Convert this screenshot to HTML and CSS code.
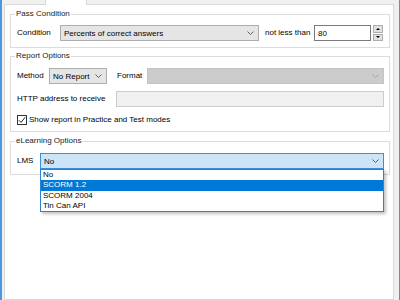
FILE: index.html
```html
<!DOCTYPE html>
<html>
<head>
<meta charset="utf-8">
<link rel="stylesheet" href="styles.css">
</head>
<body>
<div class="window">
  <div class="tabs">
    <div class="tab active"></div>
  </div>
  <div class="page">
    <fieldset class="group g1">
      <legend>Pass Condition</legend>
      <div class="row">
        <span class="lbl w-cond">Condition</span>
        <div class="combo cond"><span class="val">Percents of correct answers</span><svg class="chev" width="7" height="4" viewBox="0 0 7 4"><polyline points="0.5,0.5 3.5,3.5 6.5,0.5"/></svg></div>
        <span class="lbl w-nlt">not less than</span>
        <div class="textbox num">80</div>
        <div class="spin">
          <div class="sbtn"><svg width="4" height="2" viewBox="0 0 4 2"><polygon points="0,2 2,0 4,2"/></svg></div>
          <div class="sbtn"><svg width="4" height="2" viewBox="0 0 4 2"><polygon points="0,0 4,0 2,2"/></svg></div>
        </div>
      </div>
    </fieldset>

    <fieldset class="group g2">
      <legend>Report Options</legend>
      <div class="row">
        <span class="lbl w-method">Method</span>
        <div class="combo method"><span class="val">No Report</span><svg class="chev" width="7" height="4" viewBox="0 0 7 4"><polyline points="0.5,0.5 3.5,3.5 6.5,0.5"/></svg></div>
        <span class="lbl w-format">Format</span>
        <div class="combo disabled grow"><span class="val"></span><svg class="chev" width="7" height="4" viewBox="0 0 7 4"><polyline points="0.5,0.5 3.5,3.5 6.5,0.5"/></svg></div>
      </div>
      <div class="row">
        <span class="lbl w-http">HTTP address to receive</span>
        <div class="textbox disabled grow"></div>
      </div>
      <div class="row check-row">
        <span class="checkbox"><svg width="8" height="8" viewBox="0 0 8 8"><polyline points="0.8,4.2 3,6.4 7.2,1.2"/></svg></span>
        <span class="lbl">Show report in Practice and Test modes</span>
      </div>
    </fieldset>

    <fieldset class="group g3">
      <legend>eLearning Options</legend>
      <div class="row">
        <span class="lbl w-lms">LMS</span>
        <div class="combo open grow"><span class="val">No</span><svg class="chev" width="7" height="4" viewBox="0 0 7 4"><polyline points="0.5,0.5 3.5,3.5 6.5,0.5"/></svg>
          <ul class="dropdown">
            <li>No</li>
            <li class="sel">SCORM 1.2</li>
            <li>SCORM 2004</li>
            <li>Tin Can API</li>
          </ul>
        </div>
      </div>
    </fieldset>
  </div>
</div>
</body>
</html>
```

FILE: styles.css
```css
* { box-sizing: border-box; }
html, body { margin: 0; padding: 0; }
body {
  width: 400px;
  height: 300px;
  overflow: hidden;
  font-family: "Liberation Sans", Arial, sans-serif;
  font-size: 8px;
  color: #000;
  background: #f0f0f0;
}
.window {
  width: 400px;
  height: 300px;
  display: flex;
  flex-direction: column;
  background: #f0f0f0;
  border-left: 2px solid #4a97e0;
  border-right: 1px solid #4a97e0;
}
.tabs {
  height: 4px;
  display: flex;
  padding-left: 43px;
}
.tab.active {
  position: relative;
  z-index: 1;
  width: 42px;
  height: 5px;
  background: #fff;
  border-left: 1px solid #d9d9d9;
  border-right: 1px solid #d9d9d9;
}
.page {
  flex: 1;
  margin-left: 2px;
  width: 390px;
  background: #fff;
  border: 1px solid #d9d9d9;
  padding: 4px 3px 0 5px;
  display: flex;
  flex-direction: column;
}
.group {
  margin: 0;
  border: 1px solid #dcdcdc;
  padding: 6px 5px 6px 6px;
  min-width: 0;
  display: flex;
  flex-direction: column;
  gap: 7px;
}
.group legend {
  padding: 0 1px;
  margin-left: -2px;
  line-height: 10px;
  height: 10px;
  color: #1a1a1a;
}
.g2 { margin-top: 3px; padding-top: 7px; }
.g3 { margin-top: 4px; padding-top: 7px; padding-bottom: 5px; }
.row {
  display: flex;
  align-items: center;
}
.lbl { white-space: nowrap; line-height: 10px; }
.w-cond { width: 43px; }
.w-nlt { width: 49px; margin-left: 6px; }
.w-method { width: 32px; }
.w-format { width: 30px; margin-left: 10px; }
.w-http { width: 99px; }
.w-lms { width: 23px; }
.grow { flex: 1; min-width: 0; }

.combo {
  position: relative;
  height: 16px;
  display: flex;
  align-items: center;
  justify-content: space-between;
  padding: 0 4px 0 3px;
  background: #e5e5e5;
  border: 1px solid #adadad;
}
.combo .val { white-space: nowrap; }
.chev { display: block; flex: none; }
.chev polyline { fill: none; stroke: #606060; stroke-width: 1; }
.cond { width: 199px; }
.method { width: 58px; }
.combo.disabled { background: #cccccc; border-color: #c4c4c4; }
.combo.disabled .chev polyline { stroke: #a0a0a0; }
.combo.open { background: #cce4f7; border-color: #3c8fdb; }

.textbox {
  height: 16px;
  display: flex;
  align-items: center;
  padding: 0 3px;
  background: #fff;
  border: 1px solid #7a7a7a;
}
.num { width: 57px; margin-left: 0; }
.textbox.disabled { background: #f0f0f0; border-color: #cccccc; }

.spin {
  margin-left: 2px;
  width: 10px;
  height: 16px;
  display: flex;
  flex-direction: column;
  gap: 1px;
}
.sbtn {
  flex: 1;
  display: flex;
  align-items: center;
  justify-content: center;
  background: #e1e1e1;
  border: 1px solid #adadad;
}
.sbtn svg { display: block; }
.sbtn polygon { fill: #000; }

.check-row { height: 11px; }
.checkbox {
  width: 10px;
  height: 10px;
  margin-right: 2px;
  border: 1px solid #333;
  background: #fff;
  display: flex;
  align-items: center;
  justify-content: center;
}
.checkbox svg { display: block; }
.checkbox polyline { fill: none; stroke: #222; stroke-width: 1; }

.dropdown {
  position: absolute;
  z-index: 5;
  top: 15px;
  left: -1px;
  right: -1px;
  margin: 0;
  padding: 0;
  list-style: none;
  background: #fff;
  border: 1px solid #2f80d1;
  box-shadow: 2px 2px 3px rgba(0, 0, 0, 0.25);
}
.dropdown li {
  height: 10.25px;
  line-height: 10.25px;
  padding-left: 2px;
  white-space: nowrap;
}
.dropdown li.sel { background: #0078d7; color: #fff; }
```
